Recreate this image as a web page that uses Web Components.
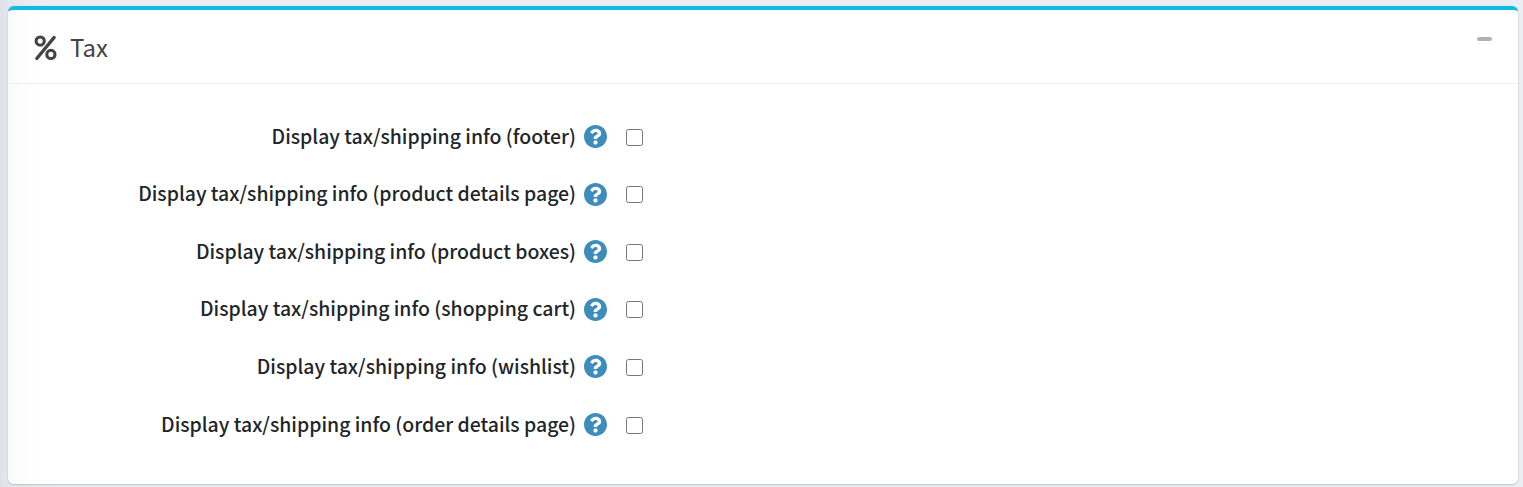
<!DOCTYPE html>
<html lang="en">
<head>
<meta charset="utf-8">
<title>Tax</title>
<style>
html{height:100%}
body{margin:0;height:487px;overflow:hidden;box-sizing:border-box;padding:6px 5px 3px 8px;background:linear-gradient(90deg,#dfe3e9 0,#e3e7ec 8px,#e9edf3 32px,#ebeef4 60px);font-family:"Noto Sans CJK SC","Noto Sans",sans-serif;color:#212529}
</style>
</head>
<body>
<tax-card heading="Tax">
  <setting-row>Display tax/shipping info (footer)</setting-row>
  <setting-row>Display tax/shipping info (product details page)</setting-row>
  <setting-row>Display tax/shipping info (product boxes)</setting-row>
  <setting-row>Display tax/shipping info (shopping cart)</setting-row>
  <setting-row>Display tax/shipping info (wishlist)</setting-row>
  <setting-row>Display tax/shipping info (order details page)</setting-row>
</tax-card>
<script>
class HelpIcon extends HTMLElement{
  constructor(){
    super();
    this.attachShadow({mode:"open"}).innerHTML=`<style>:host{display:block;width:23px;height:23px}svg{display:block;width:100%;height:100%}</style>
    <svg viewBox="8 8 496 496"><path fill="#3c8dbc" d="M504 256c0 136.997-111.043 248-248 248S8 392.997 8 256C8 119.083 119.043 8 256 8s248 111.083 248 248zM262.655 90c-54.497 0-89.255 22.957-116.549 63.758-3.536 5.286-2.353 12.415 2.715 16.258l34.699 26.31c5.205 3.947 12.621 3.008 16.665-2.122 17.864-22.658 30.113-35.797 57.303-35.797 20.429 0 45.698 13.148 45.698 32.958 0 14.976-12.363 22.667-32.534 33.976C247.128 238.528 216 254.941 216 296v4c0 6.627 5.373 12 12 12h56c6.627 0 12-5.373 12-12v-1.333c0-28.462 83.186-29.647 83.186-106.667 0-58.002-60.165-102-116.531-102zM256 338c-25.365 0-46 20.635-46 46 0 25.364 20.635 46 46 46s46-20.636 46-46c0-25.365-20.635-46-46-46z"/></svg>`;
  }
}
class SettingRow extends HTMLElement{
  constructor(){
    super();
    this.attachShadow({mode:"open"}).innerHTML=`<style>
    :host{display:grid;grid-template-columns:568px 23px 17px;column-gap:8px;align-items:center;height:57.6px}
    .label{text-align:right;white-space:nowrap;font-size:19.44px;font-weight:500;line-height:30px;padding-bottom:2px}
    input{width:17px;height:17px;margin:1px 0 0 11px}
    </style><span class="label"><slot></slot></span><help-icon></help-icon><input type="checkbox">`;
  }
}
class TaxCard extends HTMLElement{
  constructor(){
    super();
    this.attachShadow({mode:"open"}).innerHTML=`<style>
    :host{display:block;box-sizing:border-box;height:478px;border-top:4px solid #0fbbe0;border-radius:6px;background:linear-gradient(90deg,#fafafb 0,#fdfdfd 14px,#fff 30px);box-shadow:0 0 1px rgba(0,0,0,.13),0 1px 2px rgba(0,0,0,.18)}
    header{display:flex;align-items:center;box-sizing:border-box;height:74px;border-bottom:1px solid #efefef;padding:2px 26px 0 26px}
    .percent{width:24px;height:26px;flex:none}
    h2{margin:0 0 2px 12px;font-size:24px;font-weight:400;line-height:34px;color:#444}
    .minus{width:15px;height:4px;border-radius:2px;background:#adb1b8;margin:0 0 18px auto}
    main{padding-top:23.82px}
    </style>
    <header><svg class="percent" viewBox="0 0 24 26" fill="none" stroke="#444" stroke-width="3.1"><circle cx="6.2" cy="6.1" r="4.1"/><circle cx="16.9" cy="19.4" r="4.1"/><path stroke-width="3.3" stroke-linecap="round" d="M20.2 2.4 2.8 23.5"/></svg><h2></h2><div class="minus"></div></header>
    <main><slot></slot></main>`;
    this.shadowRoot.querySelector("h2").textContent=this.getAttribute("heading");
  }
}
customElements.define("help-icon",HelpIcon);
customElements.define("setting-row",SettingRow);
customElements.define("tax-card",TaxCard);
</script>
</body>
</html>
